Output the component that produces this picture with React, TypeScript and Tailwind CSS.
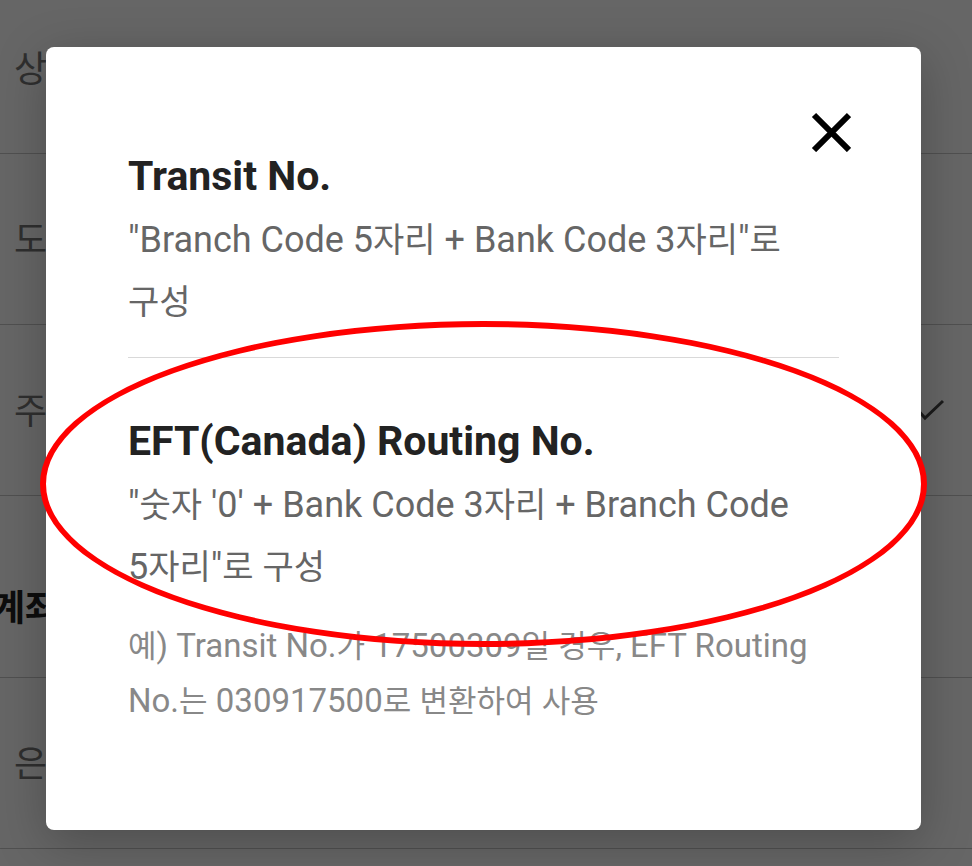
import type { ReactNode } from "react";

function FormRow({ label, children }: { label: string; children?: ReactNode }) {
  return (
    <div className="flex h-[171px] items-center justify-between border-b border-[#c8c8c8] pt-1 pr-[27px] pl-[14px] text-[36px] text-[#777]">
      <span>{label}</span>
      {children}
    </div>
  );
}

function Check() {
  return (
    <svg className="h-7 w-9" viewBox="0 0 36 28" fill="none" stroke="#444" strokeWidth="3" aria-hidden="true">
      <path d="M7 10 L16 20 L34 3" />
    </svg>
  );
}

/* Hangul is set slightly smaller than the Latin text beside it. */
function Ko({ children }: { children: ReactNode }) {
  return <span className="text-[34px] leading-none">{children}</span>;
}

function KoSmall({ children }: { children: ReactNode }) {
  return <span className="text-[31px] leading-none">{children}</span>;
}

export default function App() {
  return (
    <div className="relative min-h-screen overflow-hidden bg-white font-[Roboto,'Noto_Sans_CJK_KR',sans-serif] break-keep">
      <main className="absolute inset-0 overflow-hidden" aria-hidden="true">
        <div className="-mt-[17px]">
          <FormRow label="상세주소" />
          <FormRow label="도시" />
          <FormRow label="주">
            <Check />
          </FormRow>
          <h1 className="-ml-2 flex h-[182px] items-center border-b border-[#c8c8c8] pt-11 text-[36px] font-bold text-[#222]">
            계좌정보
          </h1>
          <FormRow label="은행명" />
        </div>
      </main>

      <div className="relative min-h-screen bg-black/60 pt-[47px] pr-[51px] pb-9 pl-[46px]">
        <div
          role="dialog"
          aria-label="Transit No."
          className="relative rounded-lg bg-white px-[82px] pt-[98px] pb-[102px] shadow-[0_12px_50px_rgba(0,0,0,0.25)]"
        >
          <button type="button" aria-label="닫기" className="absolute top-[65px] right-[70px] size-10">
            <svg className="size-10" viewBox="0 0 40 40" stroke="#000" strokeWidth="6" aria-hidden="true">
              <path d="M3 3 L38 38 M38 3 L3 38" />
            </svg>
          </button>

          <section className="border-b border-[#d9d9d9] pb-6">
            <h2 className="text-[41px] leading-[62px] font-bold text-[#222]">Transit No.</h2>
            <p className="mt-0.5 text-[36px] leading-[62px] text-[#666]">
              "Branch Code 5<Ko>자리</Ko> + Bank Code 3<Ko>자리</Ko>"<Ko>로</Ko> <Ko>구성</Ko>
            </p>
          </section>

          <section className="pt-[52px]">
            <h2 className="text-[41px] leading-[62px] font-bold text-[#222]">EFT(Canada) Routing No.</h2>
            <p className="mt-0.5 text-[36px] leading-[62px] text-[#666]">
              "<Ko>숫자</Ko> '0' + Bank Code 3<Ko>자리</Ko> + Branch Code 5<Ko>자리</Ko>"<Ko>로</Ko> <Ko>구성</Ko>
            </p>
            <p className="mt-5 text-[33px] leading-[55px] text-[#888]">
              <KoSmall>예</KoSmall>) Transit No.<KoSmall>가</KoSmall> 17500309<KoSmall>일</KoSmall>{" "}
              <KoSmall>경우</KoSmall>, EFT Routing No.<KoSmall>는</KoSmall> 030917500<KoSmall>로</KoSmall>{" "}
              <KoSmall>변환하여</KoSmall> <KoSmall>사용</KoSmall>
            </p>
          </section>

          <div
            aria-hidden="true"
            className="pointer-events-none absolute top-[274px] -right-[6px] -left-[6px] h-[326px] rounded-[50%] border-[6px] border-[#f00]"
          />
        </div>
      </div>
    </div>
  );
}
